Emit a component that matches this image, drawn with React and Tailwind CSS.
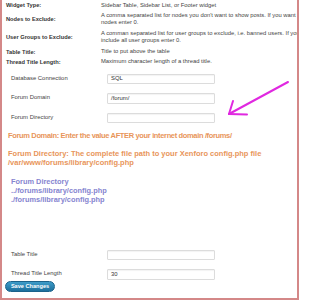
import React from 'react';

const settings = [
  { label: 'Widget Type:', lines: ['Sidebar Table, Sidebar List, or Footer widget'], h: 'h-[11px]' },
  {
    label: 'Nodes to Exclude:',
    lines: ["A comma separated list for nodes you don't want to show posts. If you want to", 'nodes enter 0.'],
    h: 'h-[16px]',
  },
  {
    label: 'User Groups to Exclude:',
    lines: ['A comman separated list for user groups to exclude, i.e. banned users. If you', 'include all user groups enter 0.'],
    h: 'h-[20px]',
  },
  { label: 'Table Title:', lines: ['Title to put above the table'], h: 'h-[10px]' },
  { label: 'Thread Title Length:', lines: ['Maximum character length of a thread title.'], h: 'h-[10px]' },
];

function Field({ label, value }) {
  return (
    <div className="flex items-center h-[19.5px]">
      <span className="w-[105px] pl-[9px] text-[5.9px] text-[#444] -mt-[1px] shrink-0">{label}</span>
      <div className="w-[108px] h-[10.5px] border border-[#dcdcdc] rounded-[1px] bg-white shadow-[inset_0_1px_1px_rgba(0,0,0,0.05)] flex items-center pl-[3px] text-[5.9px] text-[#333]">
        {value}
      </div>
    </div>
  );
}

export default function App() {
  return (
    <div className="w-[300px] h-[301px] bg-white overflow-hidden relative" style={{ fontFamily: '"Liberation Sans", Arial, sans-serif' }}>
      <div className="w-[299px] h-[300px] border-l-2 border-r-2 border-b-2 border-[#d48888] overflow-hidden">
        {/* widget settings help table */}
        <div>
          {settings.map((s) => (
            <div key={s.label} className={`flex items-center ${s.h}`}>
              <span className="w-[99px] pl-[4px] text-[5.7px] font-bold text-[#333] shrink-0">{s.label}</span>
              <div className="text-[5.85px] leading-[7.5px] text-[#444] whitespace-nowrap">
                {s.lines.map((l) => (
                  <div key={l}>{l}</div>
                ))}
              </div>
            </div>
          ))}
        </div>

        {/* form */}
        <div className="mt-[2px]">
          <Field label="Database Connection" value="SQL" />
          <Field label="Forum Domain" value="/forum/" />
          <Field label="Forum Directory" value="" />
        </div>

        <div className="pl-[6px] mt-[3px] text-[7.5px] font-bold text-[#e8955a] leading-[9px] whitespace-nowrap">
          <p className="tracking-[-0.35px]">Forum Domain: Enter the value AFTER your internet domain /forums/</p>
          <p className="mt-[9px]">Forum Directory: The complete file path to your Xenforo config.php file</p>
          <p>/var/www/forums/library/config.php</p>
        </div>

        <div className="pl-[9px] mt-[10px] text-[7.4px] font-bold text-[#8585d0] leading-[9px]">
          <p>Forum Directory</p>
          <p>../forums/library/config.php</p>
          <p>./forums/library/config.php</p>
        </div>

        <div className="mt-[41.5px]">
          <Field label="Table Title" value="" />
          <Field label="Thread Title Length" value="30" />
        </div>

        <button className="ml-[3px] -mt-[3px] w-[50px] h-[11px] rounded-full bg-gradient-to-b from-[#3d9cc9] to-[#1d6f9c] border border-[#1b628a] text-white text-[5.6px] font-bold leading-none flex items-center justify-center">
          Save Changes
        </button>
      </div>

      {/* annotation arrow */}
      <svg className="absolute left-0 top-0 pointer-events-none" width="300" height="301" viewBox="0 0 300 301">
        <g stroke="#e028e0" strokeWidth="2" strokeLinecap="round" fill="none">
          <line x1="288" y1="82" x2="229" y2="114" />
          <line x1="229" y1="114" x2="233" y2="101" />
          <line x1="229" y1="114" x2="247" y2="114.5" />
        </g>
      </svg>
    </div>
  );
}
